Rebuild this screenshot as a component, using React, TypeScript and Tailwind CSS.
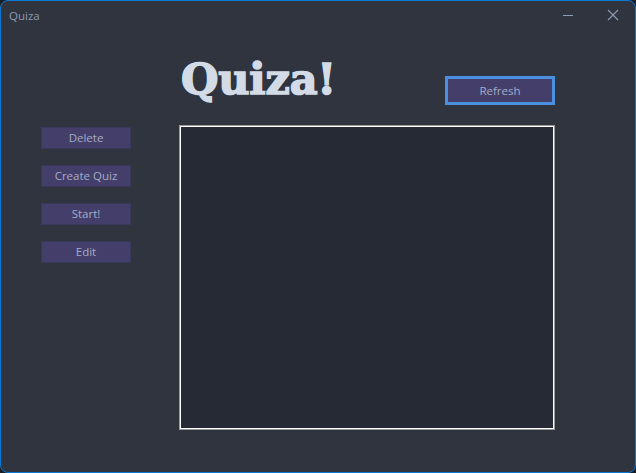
import React from "react";

export default function App() {
  const buttons = ["Delete", "Create Quiz", "Start!", "Edit"];
  return (
    <div className="w-[636px] h-[473px] bg-[#1c1f26]">
      <div className="w-[636px] h-[473px] border border-[#0b78d4] rounded-[8px] bg-[#30343f] flex flex-col overflow-hidden">
        <div className="h-[30px] flex items-center shrink-0">
          <span
            className="ml-[8px] mt-[-1px] text-[11.5px] text-[#8d9ab3]"
            style={{ fontFamily: '"Open Sans", "Noto Sans", sans-serif' }}
          >
            Quiza
          </span>
          <div className="ml-auto flex items-center">
            <svg width="12" height="12" viewBox="0 0 12 12" className="mr-[33px] mt-[-3px]">
              <line x1="1" y1="6.5" x2="11" y2="6.5" stroke="#8d9ab3" strokeWidth="1" />
            </svg>
            <svg width="12" height="12" viewBox="0 0 12 12" className="mr-[16px] mt-[-3px]">
              <path d="M1 1 L11 11 M11 1 L1 11" stroke="#8d9ab3" strokeWidth="1.1" />
            </svg>
          </div>
        </div>
        <div className="flex flex-1">
          <div className="ml-[40px] mt-[96px] flex flex-col gap-[16px] w-[90px]">
            {buttons.map((b) => (
              <div
                key={b}
                className="h-[22px] w-[90px] bg-[#443f6a] border border-[#3a3858] flex items-center justify-center text-[11.5px] text-[#a3acc8]"
                style={{ fontFamily: '"Open Sans", "Noto Sans", sans-serif' }}
              >
                {b}
              </div>
            ))}
          </div>
          <div className="ml-[48px] w-[376px] flex flex-col">
            <div className="h-[94px] flex items-start justify-between">
              <div
                className="mt-[27px] ml-[2px] text-[43px] leading-none font-bold text-[#d3dbe6] [-webkit-text-stroke:1.6px_#d3dbe6] tracking-[-0.2px]"
                style={{ fontFamily: '"DejaVu Serif", serif' }}
              >
                Quiza!
              </div>
              <div
                className="mt-[45px] w-[110px] h-[29px] border-[3px] border-[#4a8fe0] bg-[#443f6a] flex items-center justify-center text-[11.5px] text-[#a3acc8]"
                style={{ fontFamily: '"Open Sans", "Noto Sans", sans-serif' }}
              >
                Refresh
              </div>
            </div>
            <div className="w-[376px] h-[305px] border border-[#9a9a9a]">
              <div className="w-full h-full border border-white bg-[#262a35]" />
            </div>
          </div>
        </div>
      </div>
    </div>
  );
}
